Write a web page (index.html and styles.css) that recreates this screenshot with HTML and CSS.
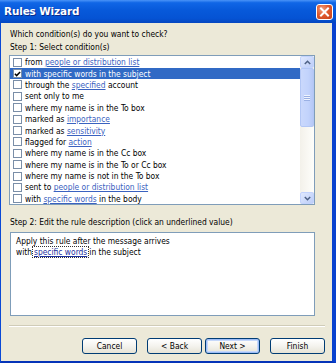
FILE: index.html
```html
<!DOCTYPE html>
<html>
<head>
<meta charset="utf-8">
<link rel="stylesheet" href="styles.css">
</head>
<body>
<div class="window">
  <div class="titlebar">
    <span class="title">Rules Wizard</span>
    <div class="close">
      <svg width="11" height="10" viewBox="0 0 11 10"><path d="M2 1.5 L9 8.5 M9 1.5 L2 8.5" stroke="#fff" stroke-width="2" stroke-linecap="square"/></svg>
    </div>
  </div>
  <div class="content">
    <div class="label q">Which condition(s) do you want to check?</div>
    <div class="label">Step 1: Select condition(s)</div>
    <div class="listbox">
      <div class="items">
        <div class="row"><span class="cb"></span><span>from <a>people or distribution list</a></span></div>
        <div class="row sel"><span class="cb"><svg width="8" height="8" viewBox="0 0 8 8"><path d="M1 3.8 L3 5.8 L7 1.6" fill="none" stroke="#000" stroke-width="1.7"/></svg></span><span>with specific words in the subject</span></div>
        <div class="row"><span class="cb"></span><span>through the <a>specified</a> account</span></div>
        <div class="row"><span class="cb"></span><span>sent only to me</span></div>
        <div class="row"><span class="cb"></span><span>where my name is in the To box</span></div>
        <div class="row"><span class="cb"></span><span>marked as <a>importance</a></span></div>
        <div class="row"><span class="cb"></span><span>marked as <a>sensitivity</a></span></div>
        <div class="row"><span class="cb"></span><span>flagged for <a>action</a></span></div>
        <div class="row"><span class="cb"></span><span>where my name is in the Cc box</span></div>
        <div class="row"><span class="cb"></span><span>where my name is in the To or Cc box</span></div>
        <div class="row"><span class="cb"></span><span>where my name is not in the To box</span></div>
        <div class="row"><span class="cb"></span><span>sent to <a>people or distribution list</a></span></div>
        <div class="row"><span class="cb"></span><span>with <a>specific words</a> in the body</span></div>
      </div>
      <div class="scrollbar">
        <div class="sbtn">
          <svg width="7" height="5" viewBox="0 0 7 5"><path d="M0.8 4 L3.5 1.3 L6.2 4" fill="none" stroke="#4D6185" stroke-width="1.5"/></svg>
        </div>
        <div class="thumb"><div class="grip"></div></div>
        <div class="track"></div>
        <div class="sbtn">
          <svg width="7" height="5" viewBox="0 0 7 5"><path d="M0.8 1 L3.5 3.7 L6.2 1" fill="none" stroke="#4D6185" stroke-width="1.5"/></svg>
        </div>
      </div>
    </div>
    <div class="label step2">Step 2: Edit the rule description (click an underlined value)</div>
    <div class="desc">
      <div>Apply this rule after the message arrives</div>
      <div>with<span class="focus"><a class="dark">specific words</a></span>in the subject</div>
    </div>
    <div class="sep"></div>
    <div class="buttons">
      <div class="btn">Cancel</div>
      <div class="btn back">&lt; Back</div>
      <div class="btn def">Next &gt;</div>
      <div class="btn finish">Finish</div>
    </div>
  </div>
</div>
</body>
</html>
```
FILE: styles.css
```css
* { box-sizing: border-box; }
html, body { margin: 0; padding: 0; }
body { width: 336px; height: 363px; overflow: hidden; font-family: "DejaVu Sans Condensed", "Liberation Sans", Arial, sans-serif; font-size: 8.4px; color: #000; }

.window {
  width: 336px; height: 363px;
  background: #ECE9D8;
  border-left: 1px solid #0A49D6;
  border-right: 4px solid #0841CF;
  border-bottom: 2px solid #0534B8;
  display: flex; flex-direction: column;
}
.titlebar {
  height: 23px;
  margin-left: -1px; margin-right: -4px;
  background: linear-gradient(#4A94F8 0, #1066E6 12%, #0759DA 45%, #0553D4 80%, #0446C0 100%);
  display: flex; align-items: center; justify-content: space-between;
  padding: 0 3px 1px 4px;
}
.title { color: #fff; font-family: "DejaVu Sans", sans-serif; font-weight: bold; font-size: 10.4px; letter-spacing: -0.1px; text-shadow: 1px 1px 0 #0A2C8A; }
.close {
  width: 17px; height: 16px; margin-top: 1px;
  border: 1px solid #fff; border-radius: 3px;
  background: radial-gradient(circle at 35% 30%, #F0A080 0, #E05A2E 45%, #C4401A 100%);
  display: flex; align-items: center; justify-content: center;
}

.content { flex: 1; padding: 5px 17px 0 8px; display: flex; flex-direction: column; }
.label { height: 13px; line-height: 13px; padding-left: 1px; white-space: nowrap; }
.listbox {
  margin-top: 1px;
  height: 150px;
  border: 1px solid #7F9DB9;
  background: #fff;
  display: flex;
}
.items { flex: 1; overflow: hidden; padding-top: 0.5px; }
.row { height: 11.4px; display: flex; align-items: center; padding-left: 3px; white-space: nowrap; }
.row.sel { background: #316AC5; color: #fff; }
.cb {
  width: 9px; height: 9px; border: 1px solid #7A8EA8; background: #fff;
  margin-right: 3px; flex: none;
  display: flex; align-items: center; justify-content: center;
}
a { color: #3A62C0; text-decoration: underline; }
a.dark { color: #1A2FA0; }

.scrollbar { width: 14px; flex: none; display: flex; flex-direction: column; background: #F4F3EE; }
.sbtn {
  height: 12px; flex: none;
  background: linear-gradient(135deg, #E0E9FE, #BCCDF8);
  border: 1px solid #C3D3FD; border-radius: 2px;
  display: flex; align-items: center; justify-content: center;
}
.thumb {
  height: 59px; flex: none;
  background: linear-gradient(90deg, #CAD8FC, #C2D3FC 60%, #B6C8F6);
  border: 1px solid #B3C7F5; border-radius: 2px;
  display: flex; align-items: center; justify-content: center;
}
.grip { width: 6px; height: 6px; background: repeating-linear-gradient(#EEF4FE 0 1px, #9AB0E4 1px 2px); }
.track { flex: 1; background: linear-gradient(90deg, #F3F1EA, #FEFEFB); }

.step2 { margin-top: 11px; }
.desc {
  margin-top: 3px; margin-left: 1px;
  height: 84px;
  background: #fff; border: 1px solid #7F9DB9;
  padding: 3px 5px;
  line-height: 11px;
}
.focus { outline: 1px dotted #333; outline-offset: 0; margin: 0 1px; padding: 0 1px; }
.sep { margin-top: 9px; margin-right: -10px; height: 2px; border-top: 1px solid #D0CCB8; border-bottom: 1px solid #fff; }
.buttons { margin-top: 11px; display: flex; justify-content: flex-end; gap: 10px; margin-right: -10px; }
.btn {
  width: 55px; height: 16px;
  border: 1px solid #003C74; border-radius: 3px;
  background: linear-gradient(#FFFFFF 0, #F4F3EE 50%, #E6E3D6 100%);
  display: flex; align-items: center; justify-content: center;
  line-height: 1;
}
.btn.def { margin-left: -7px; box-shadow: inset 0 0 0 1px #9DBDF7, inset 0 0 0 2px #C6D8FA; }
```
